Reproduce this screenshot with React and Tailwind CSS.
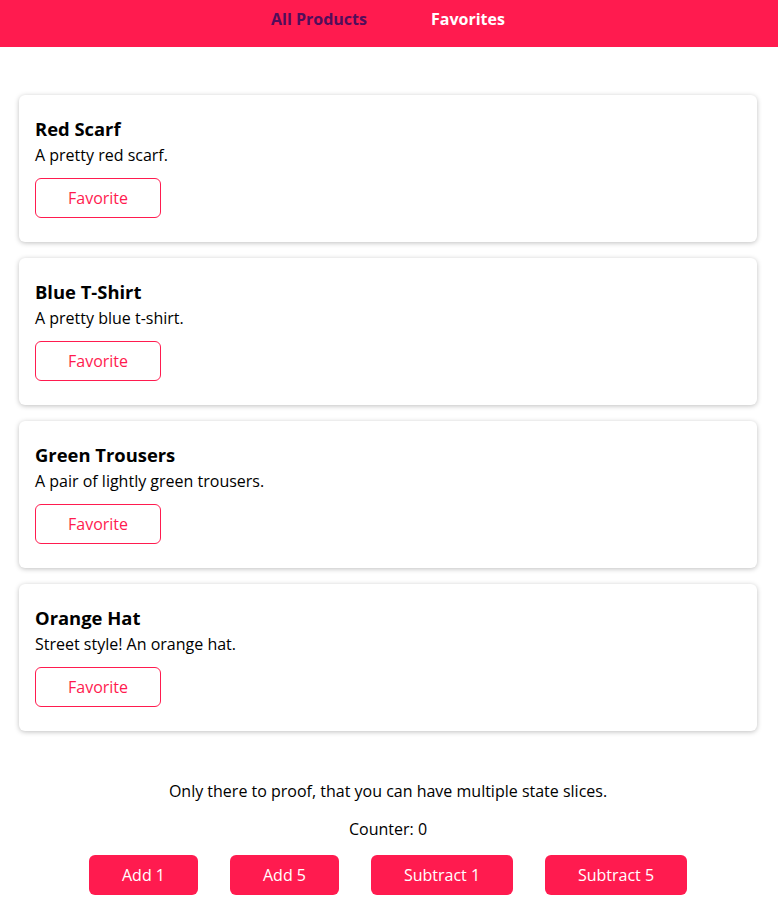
import React, { useState } from 'react';

const products = [
  { id: 'p1', title: 'Red Scarf', description: 'A pretty red scarf.' },
  { id: 'p2', title: 'Blue T-Shirt', description: 'A pretty blue t-shirt.' },
  { id: 'p3', title: 'Green Trousers', description: 'A pair of lightly green trousers.' },
  { id: 'p4', title: 'Orange Hat', description: 'Street style! An orange hat.' },
];

const ProductItem = ({ title, description }) => (
  <li className="bg-white rounded-md shadow-[0_1px_5px_rgba(0,0,0,0.25)] px-4 pt-5 pb-6">
    <h2 className="text-[18.4px] font-bold leading-[27px] text-black">{title}</h2>
    <p className="mt-px text-base leading-6 text-black">{description}</p>
    <button className="mt-[11px] h-10 w-[126px] rounded-md border border-[#ff1b4f] text-[#ff1b4f] text-base bg-white">
      Favorite
    </button>
  </li>
);

export default function App() {
  const [counter, setCounter] = useState(0);

  return (
    <div className="min-h-screen bg-white font-['Open_Sans',sans-serif]">
      <header className="h-[47px] bg-[#ff1b4f] pt-[7px]">
        <nav className="flex justify-center gap-16 pr-[2px] text-base font-bold leading-6">
          <span className="text-[#520d5a]">All Products</span>
          <span className="text-white">Favorites</span>
        </nav>
      </header>

      <main className="pt-12">
        <ul className="ml-[19px] w-[738px] flex flex-col gap-4">
          {products.map((p) => (
            <ProductItem key={p.id} {...p} />
          ))}
        </ul>

        <section className="mt-12 pr-[2px] flex flex-col items-center text-base leading-6 text-black">
          <p>Only there to proof, that you can have multiple state slices.</p>
          <p className="mt-[14px]">Counter: {counter}</p>
          <div className="mt-[14px] flex gap-8">
            <button onClick={() => setCounter(counter + 1)} className="h-10 w-[109px] rounded-md bg-[#ff1b4f] text-white">Add 1</button>
            <button onClick={() => setCounter(counter + 5)} className="h-10 w-[109px] rounded-md bg-[#ff1b4f] text-white">Add 5</button>
            <button onClick={() => setCounter(counter - 1)} className="h-10 w-[142px] rounded-md bg-[#ff1b4f] text-white">Subtract 1</button>
            <button onClick={() => setCounter(counter - 5)} className="h-10 w-[142px] rounded-md bg-[#ff1b4f] text-white">Subtract 5</button>
          </div>
        </section>
      </main>
    </div>
  );
}
